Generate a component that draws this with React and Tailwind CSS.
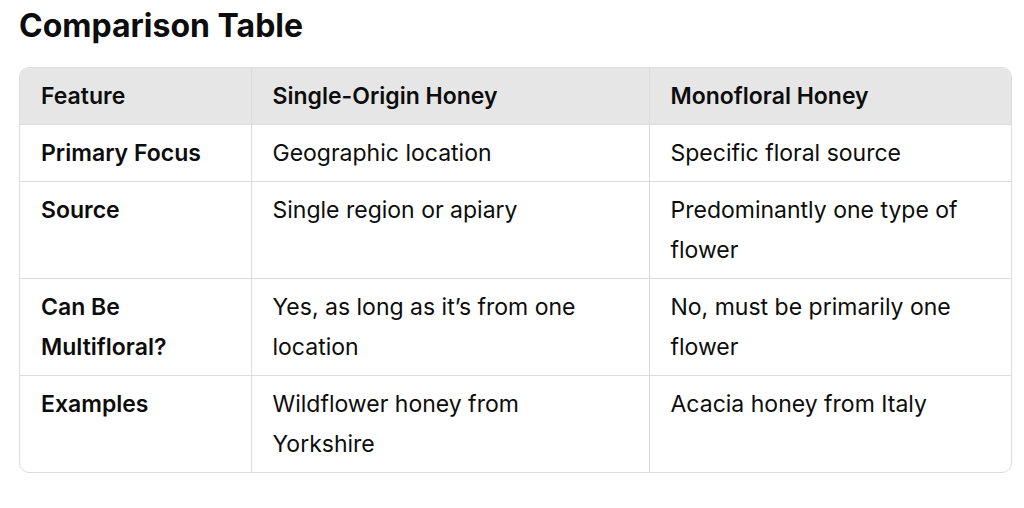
import React from 'react';

const rows = [
  ['Primary Focus', 'Geographic location', 'Specific floral source'],
  ['Source', 'Single region or apiary', 'Predominantly one type of flower'],
  ['Can Be Multifloral?', 'Yes, as long as it\u2019s from one location', 'No, must be primarily one flower'],
  ['Examples', 'Wildflower honey from Yorkshire', 'Acacia honey from Italy'],
];

const App = () => {
  return (
    <div className="min-h-screen bg-white pl-[19px] pr-[12px] pt-[6px] text-[#0d0d0d] [font-family:Inter,'Noto_Sans',sans-serif]">
      <h2 className="text-[32px] font-bold leading-[40px]">Comparison Table</h2>
      <div className="mt-[21px] overflow-hidden rounded-[10px] border border-[#dcdcdc]">
        <table className="w-full table-fixed border-collapse text-left text-[23px] leading-[40px]">
          <colgroup>
            <col className="w-[231px]" />
            <col className="w-[398px]" />
            <col />
          </colgroup>
          <thead className="bg-[#e6e6e6]">
            <tr>
              <th className="py-[8px] pl-[21px] pr-[28px] font-semibold">Feature</th>
              <th className="border-l border-[#dcdcdc] py-[8px] pl-[21px] pr-[28px] font-semibold">Single-Origin Honey</th>
              <th className="border-l border-[#dcdcdc] py-[8px] pl-[21px] pr-[28px] font-semibold">Monofloral Honey</th>
            </tr>
          </thead>
          <tbody>
            {rows.map((r) => (
              <tr key={r[0]} className="border-t border-[#dcdcdc] align-top">
                <td className="py-[8px] pl-[21px] pr-[20px] font-semibold">{r[0]}</td>
                <td className="border-l border-[#dcdcdc] py-[8px] pl-[21px] pr-[28px]">{r[1]}</td>
                <td className="border-l border-[#dcdcdc] py-[8px] pl-[21px] pr-[28px]">{r[2]}</td>
              </tr>
            ))}
          </tbody>
        </table>
      </div>
    </div>
  );
};

export default App;
